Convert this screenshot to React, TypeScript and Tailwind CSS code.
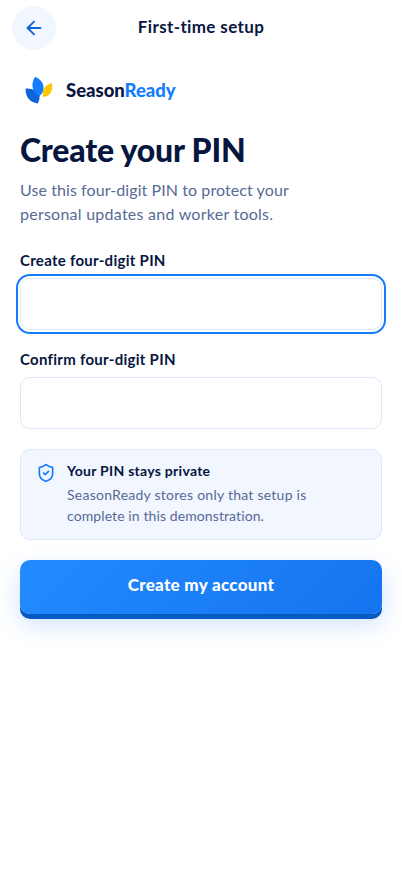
import { ArrowLeft, ShieldCheck } from 'lucide-react'

function LogoMark() {
  return (
    <svg width="36" height="36" viewBox="0 0 36 36" fill="none" aria-hidden="true">
      <path d="M5.6 16.6C12.5 16.2 19.4 19.6 19.6 24.6C19.6 27.4 18.8 29.6 17.8 31.4C10.2 30.8 5.4 25.5 5.6 16.6Z" fill="#0e66d6" />
      <path d="M15.1 4.8C10.8 11 11.4 20 19.3 24.2C26 19.4 25 8.6 15.1 4.8Z" fill="#147cff" />
      <path d="M32 11C25.8 12 20.8 18.6 23.4 25C30.4 24.6 33.2 18.4 32 11Z" fill="#ffc700" />
    </svg>
  )
}

interface PinFieldProps {
  id: string
  label: string
  active?: boolean
}

function PinField({ id, label, active = false }: PinFieldProps) {
  return (
    <div className="flex flex-col gap-2">
      <label htmlFor={id} className="h-5 text-[15px] leading-5 font-bold tracking-[0.28px] whitespace-nowrap">
        {label}
      </label>
      <input
        id={id}
        type="password"
        inputMode="numeric"
        maxLength={4}
        className={
          active
            ? 'h-[52px] w-full rounded-[10px] border border-[#dce7f8] bg-white px-4 outline-2 outline-offset-2 outline-[#147cff]'
            : 'h-[52px] w-full rounded-[10px] border border-[#dce7f8] bg-white px-4 outline-none'
        }
      />
    </div>
  )
}

export default function App() {
  return (
    <div className="min-h-screen bg-white font-['Lato','Noto_Sans',sans-serif] text-[#07163f]">
      <header className="grid h-14 grid-cols-[44px_1fr_44px] items-center px-3">
        <button type="button" aria-label="Go back" className="flex size-11 items-center justify-center rounded-full bg-[#f1f6ff] text-[#0e66d6]">
          <ArrowLeft size={22} />
        </button>
        <h2 className="pb-[2px] text-center text-[17px] leading-6 font-bold tracking-[0.37px]">First-time setup</h2>
      </header>

      <main className="px-5 pt-4">
        {/* Brand */}
        <div className="flex h-9 items-center gap-[10px]">
          <LogoMark />
          <span className="text-[18.5px] leading-6 font-black tracking-[-0.02px]">
            Season<span className="text-[#147cff]">Ready</span>
          </span>
        </div>

        <h1 className="mt-[23px] text-[32px] leading-[38px] font-black tracking-[-0.2px] whitespace-nowrap">Create your PIN</h1>
        <p className="mt-[9px] text-[16px] leading-6 whitespace-nowrap text-[#586a96]">
          <span className="tracking-[0.08px]">Use this four-digit PIN to protect your</span>
          <br />
          <span className="tracking-[0.25px]">personal updates and worker tools.</span>
        </p>

        <form className="mt-6 flex flex-col">
          <PinField id="pin" label="Create four-digit PIN" active />
          <div className="mt-[19px]">
            <PinField id="confirm-pin" label="Confirm four-digit PIN" />
          </div>

          {/* Privacy note */}
          <div className="mt-5 flex h-[91px] gap-[11px] rounded-[10px] border border-[#dce7f8] bg-[#f1f6ff] px-[15px] pt-[10px]">
            <ShieldCheck size={20} className="mt-[3px] shrink-0 text-[#147cff]" />
            <div className="whitespace-nowrap">
              <p className="text-[14px] leading-[21px] font-bold tracking-[0.27px]">Your PIN stays private</p>
              <p className="mt-[3px] text-[14px] leading-[21px] text-[#586a96]">
                <span className="tracking-[0.25px]">SeasonReady stores only that setup is</span>
                <br />
                <span className="tracking-[0.1px]">complete in this demonstration.</span>
              </p>
            </div>
          </div>

          <button
            type="button"
            className="mt-5 h-[54px] rounded-[10px] bg-[linear-gradient(135deg,#238bff,#1474ef)] pb-1 text-[17px] font-black tracking-[0.3px] text-white shadow-[0_5px_0_#075abf,0_10px_24px_rgba(20,124,255,0.22)]"
          >
            Create my account
          </button>
        </form>
      </main>
    </div>
  )
}
